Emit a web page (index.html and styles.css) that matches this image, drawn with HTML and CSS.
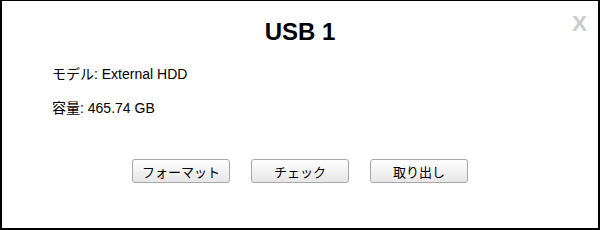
FILE: index.html
```html
<!DOCTYPE html>
<html lang="ja">
<head>
    <meta charset="UTF-8">
    <title>USB 1</title>
    <link rel="stylesheet" href="styles.css">
</head>
<body>

<div class="dialog">
    <!-- close -->
    <span class="close">X</span>

    <h2 class="title">USB 1</h2>

    <div class="info">
        <p class="info-row">モデル: External HDD</p>
        <p class="info-row">容量: 465.74 GB</p>
    </div>

    <div class="actions">
        <button type="button" class="btn">フォーマット</button>
        <button type="button" class="btn">チェック</button>
        <button type="button" class="btn">取り出し</button>
    </div>
</div>

</body>
</html>
```

FILE: styles.css
```css
body {
    margin: 0;
    padding: 0;
    font-family: Arial, 'Liberation Sans', 'Noto Sans CJK JP', sans-serif;
    background-color: #fff;
}

.dialog {
    position: relative;
    box-sizing: border-box;
    width: 600px;
    height: 230px;
    border: 2px solid #000;
    border-top-width: 1px;
    background-color: #fff;
}

.close {
    position: absolute;
    top: 10px;
    right: 11px;
    font-size: 22px;
    font-weight: bold;
    line-height: 26px;
    color: #cbcbcb;
    cursor: pointer;
}

.title {
    margin: 17px 0 0 0;
    font-size: 24px;
    line-height: 28px;
    font-weight: bold;
    color: #000;
    text-align: center;
}

.info {
    padding-left: 50px;
    margin-top: 20px;
}

.info-row {
    margin: 0 0 18px 0;
    font-size: 14px;
    line-height: 16px;
    color: #000;
}

.actions {
    display: flex;
    justify-content: center;
    gap: 21px;
    margin-top: 43px;
}

.btn {
    box-sizing: border-box;
    width: 98px;
    height: 24px;
    padding: 0;
    font-family: Arial, 'Liberation Sans', 'Noto Sans CJK JP', sans-serif;
    font-size: 13px;
    color: #000;
    background: linear-gradient(#ffffff, #e6e6e6);
    border: 1px solid #a9a9a9;
    border-radius: 3px;
    cursor: pointer;
}

.btn:hover {
    background: linear-gradient(#ffffff, #d8d8d8);
}
```
